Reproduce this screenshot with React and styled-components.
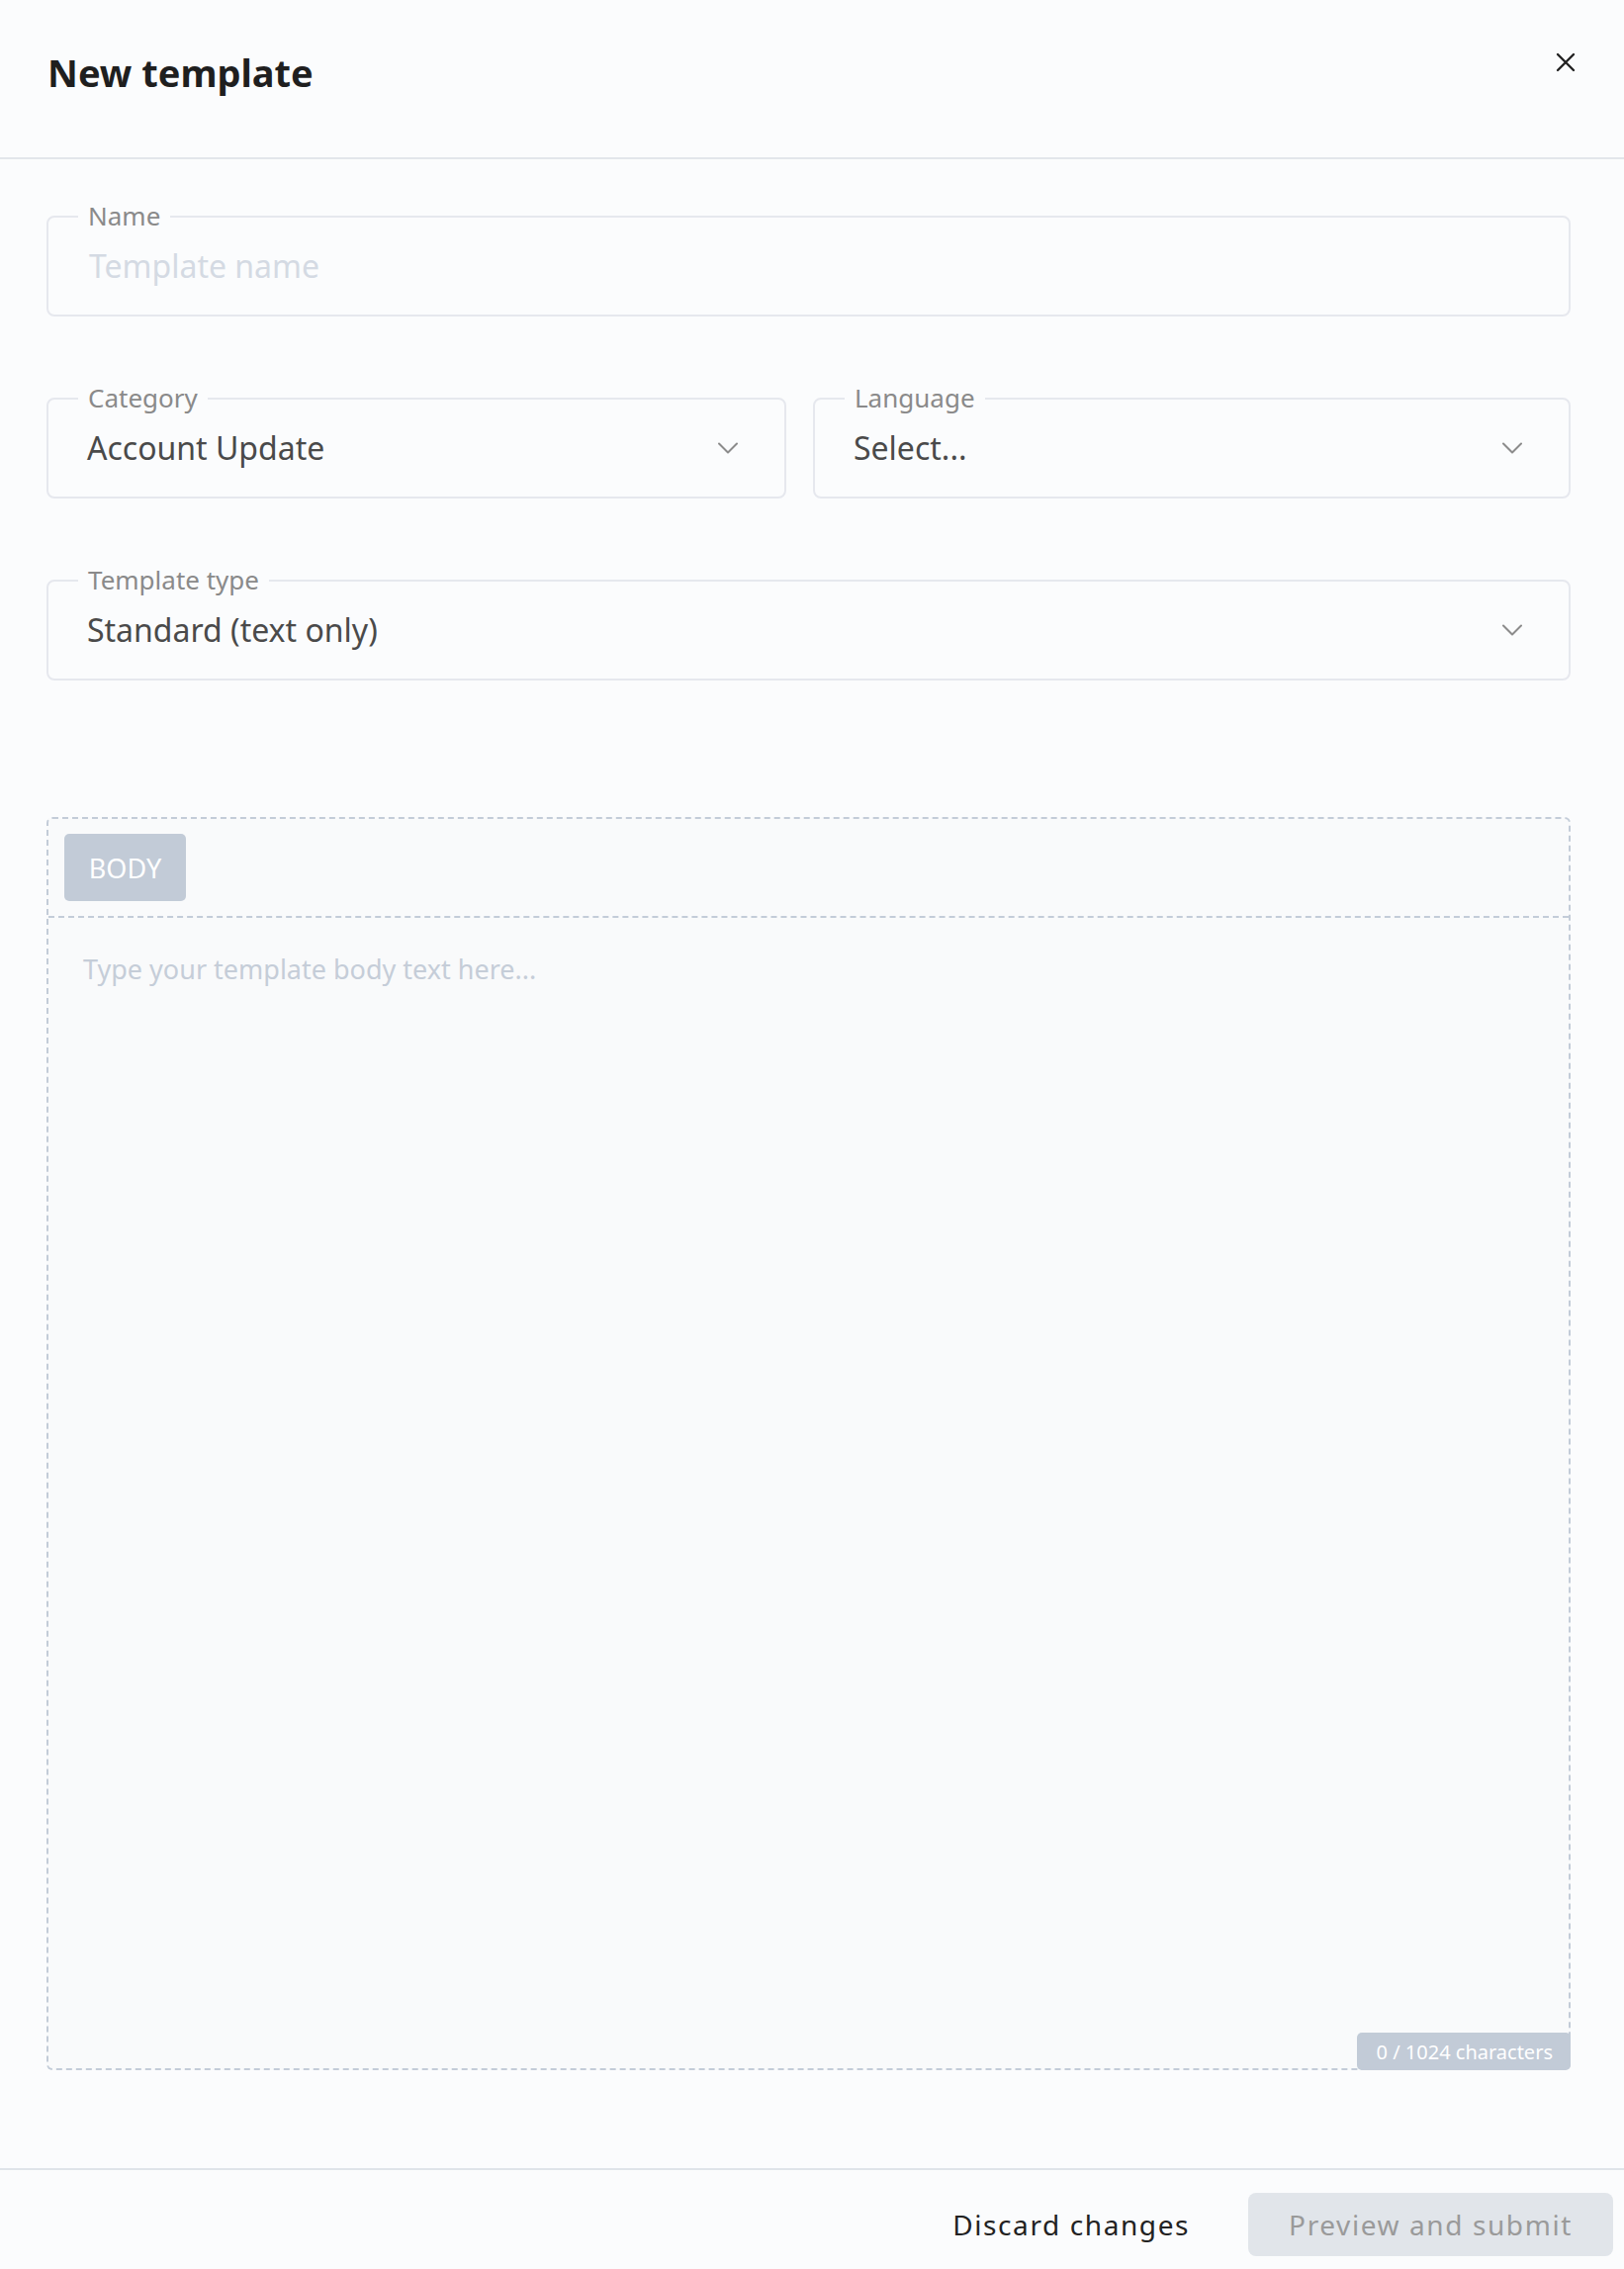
import React from "react";
import styled, { createGlobalStyle } from "styled-components";

const Global = createGlobalStyle`
  html, body { margin: 0; padding: 0; background: #fbfcfd; }
  body { font-family: "Noto Sans", "Open Sans", sans-serif; }
  * { box-sizing: border-box; }
`;

const Page = styled.div`
  display: flex;
  flex-direction: column;
  background: #fbfcfd;
`;

const Header = styled.header`
  height: 161px;
  display: flex;
  justify-content: space-between;
  align-items: flex-start;
  padding: 47px 49px 0 48px;
  border-bottom: 2px solid #e2e6eb;
`;

const Title = styled.h1`
  margin: 0;
  font-size: 38px;
  line-height: 52px;
  font-weight: 700;
  color: #1f1f1f;
`;

const CloseButton = styled.button`
  margin-top: 6px;
  width: 20px;
  height: 20px;
  padding: 0;
  border: none;
  background: transparent;
  display: flex;
  cursor: pointer;
`;

const Form = styled.div`
  display: flex;
  flex-direction: column;
  padding: 57px 54px 0 47px;
`;

const Row = styled.div`
  display: grid;
  grid-template-columns: 748fr 766fr;
  gap: 27px;
  margin-top: ${(p) => p.$mt || 0}px;
`;

const Field = styled.div`
  position: relative;
  height: 102px;
  border: 2px solid #e6e8ee;
  border-radius: 8px;
  display: flex;
  align-items: center;
  justify-content: space-between;
  padding: 0 46px 0 39px;
  margin-top: ${(p) => p.$mt || 0}px;
`;

const Label = styled.span`
  position: absolute;
  top: -15px;
  left: 30px;
  padding: 0 10px;
  background: #fbfcfd;
  font-size: 26px;
  line-height: 26px;
  color: #8a8a8a;
`;

const Value = styled.span`
  font-size: 32px;
  line-height: 40px;
  color: ${(p) => (p.$placeholder ? "#d4dae3" : "#4a4a4a")};
  padding-left: ${(p) => (p.$placeholder ? 2 : 0)}px;
`;

const Chevron = () => (
  <svg width="22" height="14" viewBox="0 0 22 14" fill="none">
    <path d="M2 2.5 L11 11.5 L20 2.5" stroke="#8c8c8c" strokeWidth="2" strokeLinecap="round" strokeLinejoin="round" />
  </svg>
);

const BodyBox = styled.div`
  position: relative;
  margin-top: 138px;
  height: 1267px;
  border: 2px dashed #c3ccd8;
  border-radius: 6px;
  background: #f9fafb;
  display: flex;
  flex-direction: column;
`;

const BodyHeader = styled.div`
  padding: 15px 16px;
  border-bottom: 2px dashed #c3ccd8;
  display: flex;
`;

const Tag = styled.span`
  width: 123px;
  height: 68px;
  border-radius: 5px;
  background: #c2cbd7;
  color: #ffffff;
  font-size: 27px;
  display: flex;
  align-items: center;
  justify-content: center;
`;

const BodyText = styled.div`
  flex: 1;
  padding: 32px 35px;
  font-size: 27px;
  line-height: 40px;
  color: #c5cdd8;
`;

const Counter = styled.span`
  position: absolute;
  right: -2px;
  bottom: -2px;
  height: 38px;
  padding: 0 18px 0 20px;
  border-radius: 5px;
  background: #c2cbd7;
  color: #ffffff;
  font-size: 20px;
  display: flex;
  align-items: center;
`;

const Footer = styled.footer`
  margin-top: 99px;
  border-top: 2px solid #dfe4e9;
  padding: 23px 11px 13px 0;
  display: flex;
  justify-content: flex-end;
  align-items: center;
  gap: 31px;
`;

const FooterButton = styled.button`
  height: 64px;
  padding: 0 ${(p) => (p.$primary ? 41 : 28)}px;
  border: none;
  border-radius: 8px;
  background: ${(p) => (p.$primary ? "#e1e5ea" : "transparent")};
  color: ${(p) => (p.$primary ? "#9a9a9a" : "#222222")};
  font-family: "Noto Sans", "Open Sans", sans-serif;
  font-size: 28px;
  letter-spacing: 1.6px;
  cursor: pointer;
`;

export default function App() {
  return (
    <Page>
      <Global />
      <Header>
        <Title>New template</Title>
        <CloseButton aria-label="Close">
          <svg width="20" height="20" viewBox="0 0 20 20" fill="none">
            <path d="M2 2 L18 18 M18 2 L2 18" stroke="#222" strokeWidth="2.4" strokeLinecap="round" />
          </svg>
        </CloseButton>
      </Header>
      <Form>
        <Field>
          <Label>Name</Label>
          <Value $placeholder>Template name</Value>
        </Field>
        <Row $mt={82}>
          <Field>
            <Label>Category</Label>
            <Value>Account Update</Value>
            <Chevron />
          </Field>
          <Field>
            <Label>Language</Label>
            <Value>Select...</Value>
            <Chevron />
          </Field>
        </Row>
        <Field $mt={82}>
          <Label>Template type</Label>
          <Value>Standard (text only)</Value>
          <Chevron />
        </Field>
        <BodyBox>
          <BodyHeader>
            <Tag>BODY</Tag>
          </BodyHeader>
          <BodyText>Type your template body text here...</BodyText>
          <Counter>0 / 1024 characters</Counter>
        </BodyBox>
      </Form>
      <Footer>
        <FooterButton>Discard changes</FooterButton>
        <FooterButton $primary>Preview and submit</FooterButton>
      </Footer>
    </Page>
  );
}
